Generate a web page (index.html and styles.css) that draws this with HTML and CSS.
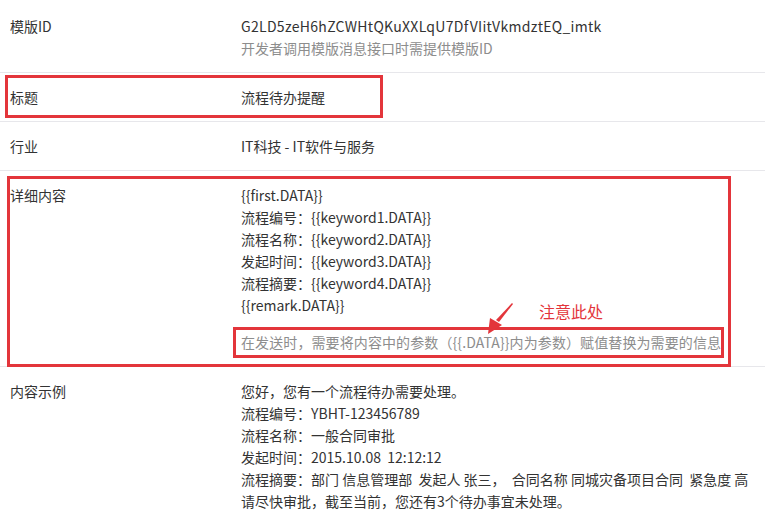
FILE: index.html
```html
<!DOCTYPE html>
<html lang="zh-CN">
<head>
    <meta charset="UTF-8">
    <meta name="viewport" content="width=device-width, initial-scale=1.0">
    <title>模版详情</title>
    <link rel="stylesheet" href="styles.css">
</head>
<body>
    <div class="detail">
        <div class="row first">
            <div class="label">模版ID</div>
            <div class="value">
                <div class="tpl-id">G2LD5zeH6hZCWHtQKuXXLqU7DfVIitVkmdztEQ_imtk</div>
                <div class="hint">开发者调用模版消息接口时需提供模版ID</div>
            </div>
        </div>
        <div class="row">
            <div class="label">标题</div>
            <div class="value">流程待办提醒</div>
        </div>
        <div class="row">
            <div class="label">行业</div>
            <div class="value">IT科技 - IT软件与服务</div>
        </div>
        <div class="row">
            <div class="label">详细内容</div>
            <div class="value">
                <div>{{first.DATA}}</div>
                <div>流程编号：{{keyword1.DATA}}</div>
                <div>流程名称：{{keyword2.DATA}}</div>
                <div>发起时间：{{keyword3.DATA}}</div>
                <div>流程摘要：{{keyword4.DATA}}</div>
                <div>{{remark.DATA}}</div>
                <div class="hint tip">在发送时，需要将内容中的参数（{{.DATA}}内为参数）赋值替换为需要的信息</div>
            </div>
        </div>
        <div class="row last">
            <div class="label">内容示例</div>
            <div class="value lines">
                <div>您好，您有一个流程待办需要处理。</div>
                <div>流程编号：YBHT-123456789</div>
                <div>流程名称：一般合同审批</div>
                <div>发起时间：2015.10.08  12:12:12</div>
                <div>流程摘要：部门 信息管理部  发起人 张三，  合同名称 同城灾备项目合同  紧急度 高</div>
                <div>请尽快审批，截至当前，您还有3个待办事宜未处理。</div>
            </div>
        </div>

        <!-- 标注 -->
        <div class="mark mark-title"></div>
        <div class="mark mark-detail"></div>
        <div class="mark mark-tip"></div>
        <div class="note">注意此处</div>
        <svg class="arrow" width="40" height="40" viewBox="0 0 40 40">
            <polygon points="28,1 29,2 15,20 12,18" fill="#e3353b"/>
            <polygon points="4,32 6,16 18,23" fill="#e3353b"/>
        </svg>
    </div>
</body>
</html>
```

FILE: styles.css
```css
body {
    margin: 0;
    background: #ffffff;
    font-family: "Noto Sans CJK SC", "Liberation Sans", sans-serif;
    font-size: 14px;
    color: #333333;
}

.detail {
    position: relative;
    width: 765px;
    overflow: hidden;
}

.row {
    display: grid;
    grid-template-columns: 231px 1fr;
    padding: 13px 0 13px 10px;
    line-height: 22px;
    border-bottom: 1px solid #e7e7eb;
}

.row.first {
    padding-top: 15px;
    padding-bottom: 13px;
}

.row.last {
    border-bottom: none;
}

.tpl-id {
    letter-spacing: 0.3px;
}

.hint {
    color: #8d8d8d;
}

.hint.tip {
    margin-top: 15px;
    letter-spacing: 0.1px;
}

.lines div {
    white-space: pre;
}

/* 红色标注框 */
.mark {
    position: absolute;
    border: 3px solid #e3353b;
}

.mark-title {
    left: 5px;
    top: 75px;
    width: 372px;
    height: 37px;
}

.mark-detail {
    left: 7px;
    top: 176px;
    width: 718px;
    height: 185px;
}

.mark-tip {
    left: 233px;
    top: 327px;
    width: 485px;
    height: 25px;
}

.note {
    position: absolute;
    left: 539px;
    top: 299px;
    font-size: 16px;
    color: #e3353b;
}

.arrow {
    position: absolute;
    left: 484px;
    top: 302px;
}
```
